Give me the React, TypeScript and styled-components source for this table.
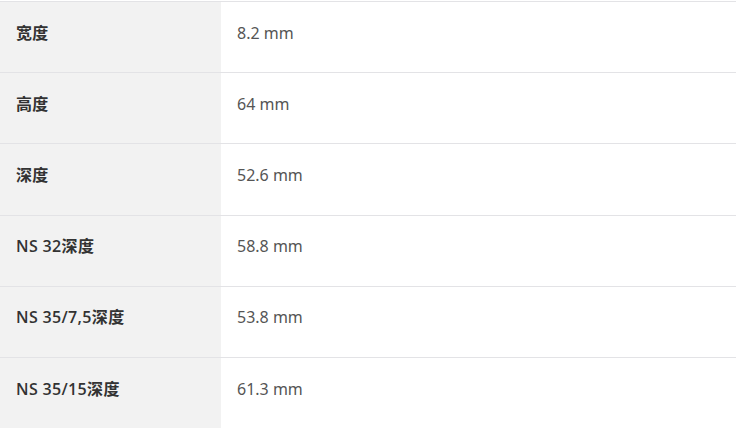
import React from "react";
import styled, { createGlobalStyle } from "styled-components";

const GlobalStyle = createGlobalStyle`
  html, body {
    margin: 0;
    padding: 0;
    background: #ffffff;
  }
  body {
    font-family: "Noto Sans", "Noto Sans CJK SC", sans-serif;
  }
`;

const Table = styled.div`
  width: 736px;
  margin-top: 1px;
  display: flex;
  flex-direction: column;
`;

const Row = styled.div`
  display: grid;
  grid-template-columns: 221px 1fr;
  border-top: 1px solid #e3e3e6;
`;

const Cell = styled.div<{ $label?: boolean }>`
  padding: 19.6px 16px 28.2px;
  line-height: 22.4px;
  font-size: 16px;
  font-family: ${(p) =>
    p.$label
      ? `"Open Sans", "Noto Sans CJK SC", sans-serif`
      : `"Noto Sans", "Noto Sans CJK SC", sans-serif`};
  letter-spacing: ${(p) => (p.$label ? "0.35px" : "0")};
  background: ${(p) => (p.$label ? "#f2f2f2" : "#ffffff")};
  color: ${(p) => (p.$label ? "#333333" : "#555555")};
  font-weight: ${(p) => (p.$label ? 600 : 400)};
`;

const rows: [string, string][] = [
  ["宽度", "8.2 mm"],
  ["高度", "64 mm"],
  ["深度", "52.6 mm"],
  ["NS 32深度", "58.8 mm"],
  ["NS 35/7,5深度", "53.8 mm"],
  ["NS 35/15深度", "61.3 mm"],
];

export default function App() {
  return (
    <>
      <GlobalStyle />
      <Table>
        {rows.map(([k, v]) => (
          <Row key={k}>
            <Cell $label>{k}</Cell>
            <Cell>{v}</Cell>
          </Row>
        ))}
      </Table>
    </>
  );
}
